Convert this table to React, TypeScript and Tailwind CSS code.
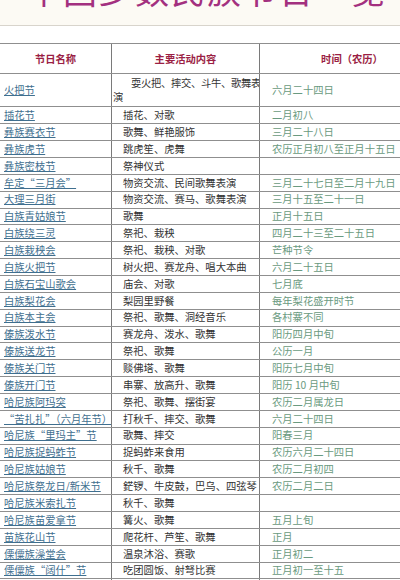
const rows: [string, string, string][] = [
  ['插花节', '插花、对歌', '二月初八'],
  ['彝族赛衣节', '歌舞、鲜艳服饰', '三月二十八日'],
  ['彝族虎节', '跳虎笙、虎舞', '农历正月初八至正月十五日'],
  ['彝族密枝节', '祭神仪式', ''],
  ['牟定“三月会”', '物资交流、民间歌舞表演', '三月二十七日至二月十九日'],
  ['大理三月街', '物资交流、赛马、歌舞表演', '三月十五至二十一日'],
  ['白族青姑娘节', '歌舞', '正月十五日'],
  ['白族绕三灵', '祭祀、栽秧', '四月二十三至二十五日'],
  ['白族栽秧会', '祭祀、栽秧、对歌', '芒种节令'],
  ['白族火把节', '树火把、赛龙舟、唱大本曲', '六月二十五日'],
  ['白族石宝山歌会', '庙会、对歌', '七月底'],
  ['白族梨花会', '梨园里野餐', '每年梨花盛开时节'],
  ['白族本主会', '祭祀、歌舞、洞经音乐', '各村寨不同'],
  ['傣族泼水节', '赛龙舟、泼水、歌舞', '阳历四月中旬'],
  ['傣族送龙节', '祭祀、歌舞', '公历一月'],
  ['傣族关门节', '赕佛塔、歌舞', '阳历七月中旬'],
  ['傣族开门节', '串寨、放高升、歌舞', '阳历 10 月中旬'],
  ['哈尼族阿玛突', '祭祀、歌舞、摆街宴', '农历二月属龙日'],
  ['“苦扎扎”（六月年节）', '打秋千、摔交、歌舞', '六月二十四日'],
  ['哈尼族“里玛主”节', '歌舞、摔交', '阳春三月'],
  ['哈尼族捉蚂蚱节', '捉蚂蚱来食用', '农历六月二十四日'],
  ['哈尼族姑娘节', '秋千、歌舞', '农历二月初四'],
  ['哈尼族祭龙日/新米节', '鋩锣、牛皮鼓，巴乌、四弦琴', '农历二月二日'],
  ['哈尼族米索扎节', '秋千、歌舞', ''],
  ['哈尼族苗爱拿节', '篝火、歌舞', '五月上旬'],
  ['苗族花山节', '爬花杆、芦笙、歌舞', '正月'],
  ['傈僳族澡堂会', '温泉沐浴、赛歌', '正月初二'],
  ['傈僳族“阔什”节', '吃团圆饭、射弩比赛', '正月初一至十五'],
  ['傈僳族刀杆节', '上刀山、下火海、歌舞', '二月初八'],
];

export default function App() {
  return (
    <div
      className="w-[400px] h-[580px] overflow-hidden bg-white"
      style={{ fontFamily: '"Noto Sans CJK SC", "Liberation Serif", serif' }}
    >
      <div className="h-[26px] overflow-hidden bg-[#fcfaf4] border-b border-[#d8d4cc]">
        <div className="mt-[-27px] pl-[27px] text-[34px] leading-none tracking-[2px] text-[#a3307f] whitespace-nowrap">
          中国少数民族节日一览
        </div>
      </div>
      <div className="h-[16.7px]" />
      <div className="w-[444px] border-t border-[#8f8f8f] text-[10.3px]">
        <div className="flex h-[30.3px] border-b border-[#8f8f8f] font-bold text-[#9b1f45]">
          <div className="w-[112px] flex items-center justify-center border-r border-[#7a7a7a]">节日名称</div>
          <div className="w-[148px] flex items-center justify-center border-r border-[#7a7a7a]">主要活动内容</div>
          <div className="w-[184px] flex items-center justify-center">时间（农历）</div>
        </div>
        <div className="flex h-[33.4px] border-b border-[#8f8f8f]">
          <div className="w-[112px] flex items-center pl-[4px] border-r border-[#7a7a7a] text-[#3f6f8f] underline">火把节</div>
          <div className="w-[148px] flex flex-col justify-center pl-[1px] border-r border-[#7a7a7a] text-[#333] leading-[14px] overflow-hidden">
            <span className="pl-[18px] whitespace-nowrap tracking-[-0.3px]">耍火把、摔交、斗牛、歌舞表</span>
            <span>演</span>
          </div>
          <div className="w-[184px] flex items-center pl-[12px] text-[#6a9a80]">六月二十四日</div>
        </div>
        {rows.map(([name, act, time], i) => (
          <div key={i} className="flex h-[16.86px] border-b border-[#8f8f8f] leading-none">
            <div className="w-[112px] flex items-center pl-[4px] border-r border-[#7a7a7a] text-[#3f6f8f] underline whitespace-nowrap overflow-hidden">
              {name}
            </div>
            <div className="w-[148px] flex items-center pl-[11px] border-r border-[#7a7a7a] text-[#333] whitespace-nowrap overflow-hidden">
              {act}
            </div>
            <div className="w-[184px] flex items-center pl-[12px] text-[#6a9a80] whitespace-nowrap">{time}</div>
          </div>
        ))}
      </div>
    </div>
  );
}
